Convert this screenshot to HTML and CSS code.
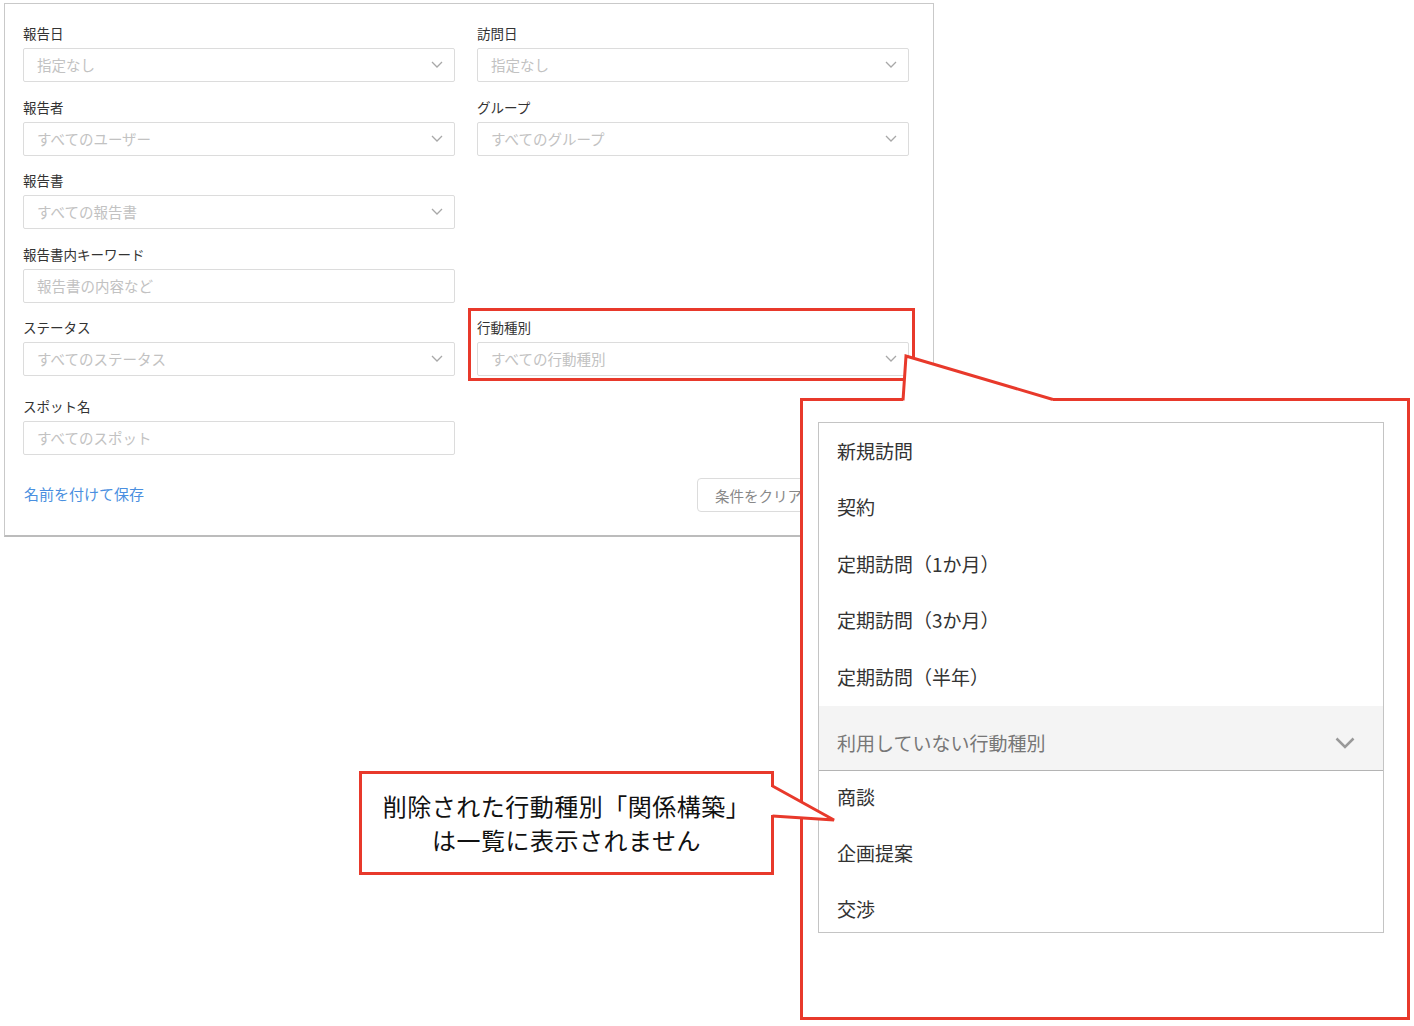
FILE: index.html
```html
<!DOCTYPE html>
<html lang="ja">
<head>
    <meta charset="UTF-8">
    <meta name="viewport" content="width=device-width, initial-scale=1.0">
    <title>行動種別の絞り込み</title>
    <link rel="stylesheet" href="styles.css">
</head>
<body>
    <div class="page">
        <!-- 絞り込み条件 -->
        <div class="filter-panel">
            <div class="filter-grid">
                <div class="field">
                    <label>報告日</label>
                    <div class="select">指定なし<svg class="chevron" viewBox="0 0 12 7"><path d="M1 1l5 5 5-5"/></svg></div>
                </div>
                <div class="field">
                    <label>訪問日</label>
                    <div class="select">指定なし<svg class="chevron" viewBox="0 0 12 7"><path d="M1 1l5 5 5-5"/></svg></div>
                </div>

                <div class="field">
                    <label>報告者</label>
                    <div class="select">すべてのユーザー<svg class="chevron" viewBox="0 0 12 7"><path d="M1 1l5 5 5-5"/></svg></div>
                </div>
                <div class="field">
                    <label>グループ</label>
                    <div class="select">すべてのグループ<svg class="chevron" viewBox="0 0 12 7"><path d="M1 1l5 5 5-5"/></svg></div>
                </div>

                <div class="field">
                    <label>報告書</label>
                    <div class="select">すべての報告書<svg class="chevron" viewBox="0 0 12 7"><path d="M1 1l5 5 5-5"/></svg></div>
                </div>
                <div class="field empty"></div>

                <div class="field">
                    <label>報告書内キーワード</label>
                    <div class="select">報告書の内容など</div>
                </div>
                <div class="field empty"></div>

                <div class="field">
                    <label>ステータス</label>
                    <div class="select">すべてのステータス<svg class="chevron" viewBox="0 0 12 7"><path d="M1 1l5 5 5-5"/></svg></div>
                </div>
                <div class="field highlighted">
                    <label>行動種別</label>
                    <div class="select">すべての行動種別<svg class="chevron" viewBox="0 0 12 7"><path d="M1 1l5 5 5-5"/></svg></div>
                    <span class="highlight-frame"></span>
                </div>

                <div class="field spaced">
                    <label>スポット名</label>
                    <div class="select">すべてのスポット</div>
                </div>
                <div class="field empty"></div>
            </div>

            <div class="filter-footer">
                <a href="#" class="save-link">名前を付けて保存</a>
                <button class="btn-clear">条件をクリア</button>
            </div>
        </div>

        <!-- 行動種別の選択肢（拡大） -->
        <div class="callout-list">
            <svg class="callout-pointer" width="260" height="52" viewBox="0 0 260 52">
                <polygon points="103,49 103,46.5 106,3 253,46.5 253,49" fill="#fff"/>
                <polyline points="103,47.5 106,3 253,46.5" fill="none" stroke="#e8392b" stroke-width="3"/>
            </svg>
            <div class="dropdown">
                <div class="dropdown-item">新規訪問</div>
                <div class="dropdown-item">契約</div>
                <div class="dropdown-item">定期訪問（1か月）</div>
                <div class="dropdown-item">定期訪問（3か月）</div>
                <div class="dropdown-item">定期訪問（半年）</div>
                <div class="dropdown-group">
                    <span>利用していない行動種別</span>
                    <svg class="group-chevron" viewBox="0 0 20 12"><path d="M1.5 1.5l8.5 8.5 8.5-8.5"/></svg>
                </div>
                <div class="dropdown-sub">
                    <div class="dropdown-item">商談</div>
                    <div class="dropdown-item">企画提案</div>
                    <div class="dropdown-item">交渉</div>
                </div>
            </div>
        </div>

        <!-- 注釈 -->
        <div class="note">
            <svg class="note-pointer" width="68" height="60" viewBox="0 0 68 60">
                <polygon points="2,16 5,16 66,49 5,44 2,44" fill="#fff"/>
                <polyline points="4.5,15 66,49 4.5,45" fill="none" stroke="#e8392b" stroke-width="3"/>
            </svg>
            <p>削除された行動種別「関係構築」<br>は一覧に表示されません</p>
        </div>
    </div>
</body>
</html>
```

FILE: styles.css
```css
/* General Styles */
* {
    margin: 0;
    padding: 0;
    box-sizing: border-box;
}

body {
    font-family: "Noto Sans CJK JP", "Noto Sans", sans-serif;
    background-color: #fff;
    color: #333;
}

.page {
    position: relative;
    width: 1414px;
    height: 1026px;
    padding: 3px 0 0 4px;
}

/* Filter panel */
.filter-panel {
    width: 930px;
    border: 1px solid #c9c9c9;
    border-bottom: 2px solid #bcbcbc;
    padding: 19px 23px 23px 18px;
}

.filter-grid {
    display: grid;
    grid-template-columns: 432px 432px;
    column-gap: 22px;
    row-gap: 14.5px;
}

.field {
    position: relative;
}

.field.spaced {
    margin-top: 5.5px;
}

.field label {
    display: block;
    height: 20px;
    line-height: 20px;
    margin-bottom: 5px;
    font-size: 13.5px;
    color: #333;
}

.select {
    display: flex;
    align-items: center;
    justify-content: space-between;
    height: 34px;
    padding: 0 11px 1px 13px;
    border: 1px solid #dcdcdc;
    border-radius: 2px;
    font-size: 14.5px;
    color: #c2c2c2;
    background-color: #fff;
}

.chevron {
    width: 12px;
    height: 7px;
    fill: none;
    stroke: #a8a8a8;
    stroke-width: 1.3;
}

/* 赤枠 */
.highlight-frame {
    position: absolute;
    top: -9px;
    left: -9px;
    right: -6px;
    bottom: -5px;
    border: 3px solid #e8392b;
}

.filter-footer {
    display: flex;
    align-items: center;
    justify-content: space-between;
    height: 34px;
    margin-top: 23px;
}

.save-link {
    margin-left: 1px;
    margin-top: -3px;
    font-size: 15px;
    color: #4a8fe0;
    text-decoration: none;
}

.btn-clear {
    height: 34px;
    margin-right: 91px;
    padding: 0 16px 0 17px;
    border: 1px solid #dcdcdc;
    border-radius: 4px;
    background-color: #fff;
    font-family: inherit;
    font-size: 14.5px;
    color: #888;
    white-space: nowrap;
}

/* 選択肢の拡大表示 */
.callout-list {
    position: absolute;
    left: 800px;
    top: 398px;
    width: 610px;
    height: 622px;
    border: 3px solid #e8392b;
    background-color: #fff;
    padding: 21px 0 0 15px;
    z-index: 2;
}

.callout-pointer {
    position: absolute;
    left: -3px;
    top: -48px;
    overflow: visible;
}

.dropdown {
    width: 566px;
    height: 511px;
    border: 1px solid #c4c4c4;
    overflow: hidden;
}

.dropdown-item {
    display: flex;
    align-items: center;
    height: 56.5px;
    padding-left: 18px;
    padding-bottom: 2px;
    font-size: 19px;
    color: #333;
}

.dropdown-group {
    display: flex;
    align-items: center;
    justify-content: space-between;
    height: 65px;
    padding: 10px 28px 0 18px;
    background-color: #f4f4f4;
    border-bottom: 1px solid #b4b4b4;
    font-size: 19px;
    color: #777;
}

.group-chevron {
    width: 20px;
    height: 12px;
    fill: none;
    stroke: #999;
    stroke-width: 2.5;
}

.dropdown-sub {
    margin-top: -1px;
}

.dropdown-sub .dropdown-item {
    height: 56px;
}

/* 注釈 */
.note {
    position: absolute;
    left: 359px;
    top: 771px;
    width: 415px;
    height: 104px;
    border: 3px solid #e8392b;
    background-color: #fff;
    display: flex;
    align-items: center;
    justify-content: center;
    z-index: 3;
}

.note-pointer {
    position: absolute;
    right: -65px;
    top: -3px;
    overflow: visible;
}

.note p {
    font-size: 24px;
    line-height: 34px;
    letter-spacing: 0.5px;
    text-align: center;
    color: #111;
}
```
